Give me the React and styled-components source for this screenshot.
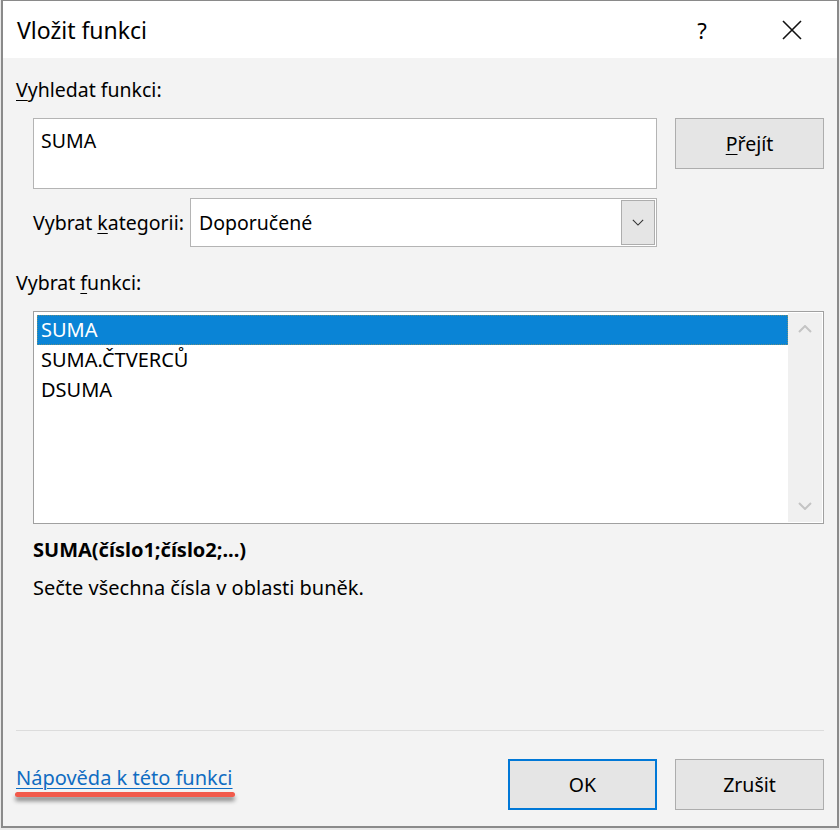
import React from 'react';
import styled, { createGlobalStyle } from 'styled-components';

const GlobalStyle = createGlobalStyle`
  html, body {
    margin: 0;
    padding: 0;
    background: #e9e9e9;
  }
  body {
    font-family: "Noto Sans", "Open Sans", "Liberation Sans", sans-serif;
    color: #000;
  }
`;

const Dialog = styled.div`
  box-sizing: border-box;
  width: 838px;
  height: 828px;
  margin-left: 1px;
  border: 2px solid #8a8a8a;
  border-top-width: 1px;
  background: #f3f3f3;
  display: flex;
  flex-direction: column;
`;

const TitleBar = styled.div`
  height: 57px;
  background: #fff;
  display: flex;
  align-items: center;
  padding-left: 14px;
  flex-shrink: 0;
`;

const Title = styled.div`
  font-size: 23px;
  flex: 1;
  margin-top: 1px;
`;

const TitleButton = styled.button`
  width: 90px;
  height: 57px;
  border: none;
  background: transparent;
  display: flex;
  align-items: center;
  justify-content: center;
  font-family: inherit;
  font-size: 22px;
  color: #000;
  padding: 0;
`;

const Body = styled.div`
  flex: 1;
  display: flex;
  flex-direction: column;
  padding: 0 13px 0 13px;
`;

const Label = styled.div`
  font-size: 19.5px;
  line-height: 28px;
  margin-top: ${p => p.$top || 0}px;
  white-space: nowrap;
`;

const Key = styled.span`
  text-decoration: underline;
  text-underline-offset: 3px;
  text-decoration-thickness: 1px;
`;

const SearchGrid = styled.div`
  display: grid;
  grid-template-columns: 624px 149px;
  column-gap: 18px;
  margin-top: 14px;
  margin-left: 17px;
`;

const LeftCol = styled.div`
  display: flex;
  flex-direction: column;
  gap: 9px;
`;

const SearchInput = styled.div`
  box-sizing: border-box;
  height: 71px;
  background: #fff;
  border: 1px solid #b4b4b4;
  padding: 8px 7px;
  font-size: 19.5px;
  line-height: 28px;
`;

const CategoryRow = styled.div`
  display: flex;
  align-items: center;
  gap: 6px;
`;

const Select = styled.div`
  box-sizing: border-box;
  flex: 1;
  height: 49px;
  background: #fff;
  border: 1px solid #b4b4b4;
  display: flex;
  align-items: center;
  padding: 1px;
  font-size: 19.5px;
`;

const SelectValue = styled.div`
  flex: 1;
  padding-left: 7px;
`;

const DropButton = styled.div`
  box-sizing: border-box;
  width: 34px;
  height: 45px;
  background: #e5e5e5;
  border: 1px solid #adadad;
  display: flex;
  align-items: center;
  justify-content: center;
`;

const Button = styled.button`
  box-sizing: border-box;
  width: 149px;
  height: 51px;
  background: #e5e5e5;
  border: ${p => (p.$primary ? '2px solid #0078d7' : '1px solid #adadad')};
  font-family: inherit;
  font-size: 19.5px;
  color: #000;
  padding: 0;
  display: flex;
  align-items: center;
  justify-content: center;
`;

const ListBox = styled.div`
  box-sizing: border-box;
  height: 213px;
  margin-top: 14px;
  margin-left: 17px;
  background: #fff;
  border: 1px solid #a0a0a0;
  display: flex;
  padding: 3px 1px 3px 3px;
`;

const Items = styled.div`
  flex: 1;
  display: flex;
  flex-direction: column;
`;

const Item = styled.div`
  box-sizing: border-box;
  height: 30px;
  line-height: 28px;
  padding-left: 3px;
  font-size: 20px;
  color: ${p => (p.$selected ? '#fff' : '#000')};
  background: ${p => (p.$selected ? '#0a84d6' : 'transparent')};
  border: 1px dotted ${p => (p.$selected ? '#6b8f80' : 'transparent')};
`;

const ScrollBar = styled.div`
  width: 34px;
  background: #f0f0f0;
  display: flex;
  flex-direction: column;
  align-items: center;
  justify-content: space-between;
  padding: 12px 0 12px;
  margin: -2px 0 -2px;
`;

const Syntax = styled.div`
  font-size: 20px;
  font-weight: 700;
  line-height: 28px;
  margin-top: 12px;
  margin-left: 17px;
`;

const Description = styled.div`
  font-size: 20px;
  line-height: 28px;
  margin-top: 10px;
  margin-left: 17px;
`;

const Spacer = styled.div`
  flex: 1;
`;

const Separator = styled.div`
  height: 1px;
  background: #dcdcdc;
`;

const Footer = styled.div`
  display: flex;
  align-items: center;
  gap: 18px;
  margin-top: 28px;
  margin-bottom: 16px;
`;

const HelpLink = styled.a`
  position: relative;
  margin-right: auto;
  margin-top: -13px;
  font-size: 20px;
  line-height: 28px;
  color: #0f6cc2;
  text-decoration: underline;
  text-underline-offset: 3px;
  text-decoration-thickness: 1px;
  cursor: pointer;

  &::after {
    content: '';
    position: absolute;
    left: -1px;
    right: -2px;
    bottom: -5px;
    height: 5px;
    border-radius: 3px;
    background: #f25a4b;
    box-shadow: 0 4px 4px rgba(0, 0, 0, 0.45);
  }
`;

const Chevron = ({ up, color = '#c4c4c4', w = 14, h = 8, sw = 2 }) => (
  <svg width={w} height={h} viewBox="0 0 14 8" fill="none">
    <path
      d={up ? 'M1 7 L7 1 L13 7' : 'M1 1 L7 7 L13 1'}
      stroke={color}
      strokeWidth={sw}
    />
  </svg>
);

const CloseIcon = () => (
  <svg width="20" height="20" viewBox="0 0 20 20" fill="none">
    <path d="M1 1 L19 19 M19 1 L1 19" stroke="#111" strokeWidth="1.6" />
  </svg>
);

export default function App() {
  const items = ['SUMA', 'SUMA.ČTVERCŮ', 'DSUMA'];
  return (
    <>
      <GlobalStyle />
      <Dialog>
        <TitleBar>
          <Title>Vložit funkci</Title>
          <TitleButton>?</TitleButton>
          <TitleButton>
            <CloseIcon />
          </TitleButton>
        </TitleBar>
        <Body>
          <Label $top={18}>
            <Key>V</Key>yhledat funkci:
          </Label>
          <SearchGrid>
            <LeftCol>
              <SearchInput>SUMA</SearchInput>
              <CategoryRow>
                <Label>
                  Vybrat <Key>k</Key>ategorii:
                </Label>
                <Select>
                  <SelectValue>Doporučené</SelectValue>
                  <DropButton>
                    <Chevron color="#333" w={12} h={7} sw={1.3} />
                  </DropButton>
                </Select>
              </CategoryRow>
            </LeftCol>
            <Button>
              <span>
                <Key>P</Key>řejít
              </span>
            </Button>
          </SearchGrid>
          <Label $top={22}>
            Vybrat <Key>f</Key>unkci:
          </Label>
          <ListBox>
            <Items>
              {items.map((it, i) => (
                <Item key={it} $selected={i === 0}>
                  {it}
                </Item>
              ))}
            </Items>
            <ScrollBar>
              <Chevron up />
              <Chevron />
            </ScrollBar>
          </ListBox>
          <Syntax>SUMA(číslo1;číslo2;...)</Syntax>
          <Description>Sečte všechna čísla v oblasti buněk.</Description>
          <Spacer />
          <Separator />
          <Footer>
            <HelpLink>Nápověda k této funkci</HelpLink>
            <Button $primary>OK</Button>
            <Button>Zrušit</Button>
          </Footer>
        </Body>
      </Dialog>
    </>
  );
}
